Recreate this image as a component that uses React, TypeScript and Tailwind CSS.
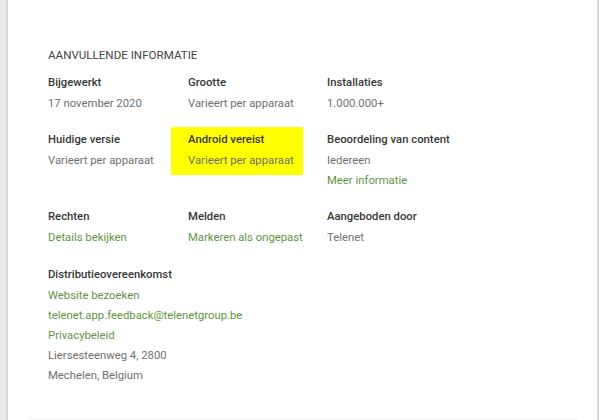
import React from "react";

type Item = {
  label: string;
  lines: { text: string; link?: boolean }[];
  highlight?: boolean;
};

const items: Item[] = [
  { label: "Bijgewerkt", lines: [{ text: "17 november 2020" }] },
  { label: "Grootte", lines: [{ text: "Varieert per apparaat" }] },
  { label: "Installaties", lines: [{ text: "1.000.000+" }] },
  { label: "Huidige versie", lines: [{ text: "Varieert per apparaat" }] },
  { label: "Android vereist", lines: [{ text: "Varieert per apparaat" }], highlight: true },
  {
    label: "Beoordeling van content",
    lines: [{ text: "Iedereen" }, { text: "Meer informatie", link: true }],
  },
  { label: "Rechten", lines: [{ text: "Details bekijken", link: true }] },
  { label: "Melden", lines: [{ text: "Markeren als ongepast", link: true }] },
  { label: "Aangeboden door", lines: [{ text: "Telenet" }] },
];

const distributie = [
  { text: "Website bezoeken", link: true },
  { text: "telenet.app.feedback@telenetgroup.be", link: true },
  { text: "Privacybeleid", link: true },
  { text: "Liersesteenweg 4, 2800" },
  { text: "Mechelen, Belgium" },
];

function Line({ text, link }: { text: string; link?: boolean }) {
  return (
    <div className={`leading-[20px] ${link ? "text-[#5f9444]" : "text-[#707070]"}`}>{text}</div>
  );
}

function InfoItem({ item }: { item: Item }) {
  return (
    <div
      className={
        item.highlight
          ? "bg-[#ffff00] -ml-[17px] pl-[17px] -mt-[3px] pt-[3px] pb-[4px] -mb-[4px] w-[132px] self-start"
          : ""
      }
    >
      <div className="leading-[20px] mb-[1px] font-medium text-[#383838]">{item.label}</div>
      {item.lines.map((l) => (
        <Line key={l.text} text={l.text} link={l.link} />
      ))}
    </div>
  );
}

export default function App() {
  return (
    <div
      className="h-[420px] w-[599px] overflow-hidden flex bg-white text-[11.3px]"
      style={{ fontFamily: "Roboto, 'Noto Sans', sans-serif" }}
    >
      {/* linker schaduwrand */}
      <div className="w-[6px] bg-[#ebebeb]" />
      <div className="w-[2px] bg-[#dadada]" />

      <main className="flex-1 bg-white px-[20px] pt-[20px] flex flex-col">
        <div className="h-[2px] bg-[#f2f2f2]" />

        <section className="pl-[20px] pt-[25px]">
          <h2 className="leading-[20px] text-[11.6px] text-[#444]">AANVULLENDE INFORMATIE</h2>

          <div className="grid grid-cols-[140px_139px_1fr] gap-y-[16px] mt-[8px]">
            {items.map((item) => (
              <InfoItem key={item.label} item={item} />
            ))}
          </div>

          <div className="mt-[17px]">
            <div className="leading-[20px] mb-[1px] font-medium text-[#383838]">Distributieovereenkomst</div>
            {distributie.map((l) => (
              <Line key={l.text} text={l.text} link={l.link} />
            ))}
          </div>
        </section>

        <div className="h-[2px] bg-[#f2f2f2] mt-[33px] shrink-0" />
      </main>

      <div className="w-[2px] bg-[#d6d6d6]" />
    </div>
  );
}
